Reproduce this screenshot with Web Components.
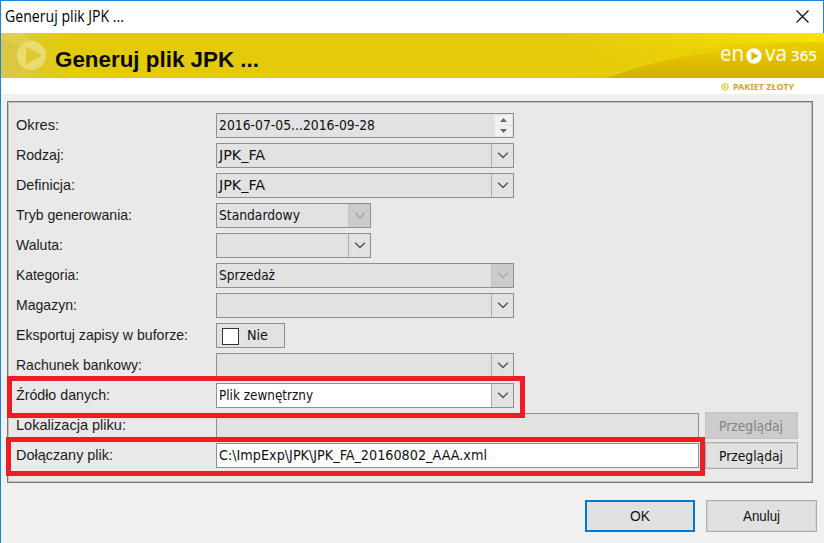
<!DOCTYPE html>
<html lang="pl">
<head>
<meta charset="utf-8">
<title>Generuj plik JPK ...</title>
<style>
  html, body {
    margin: 0;
    height: 100%;
    overflow: hidden;
  }
</style>
</head>
<body>
<jpk-window></jpk-window>

<script>
// one line of text, condensed or widened to the given width
class FitText extends HTMLElement {
  static get style() {
    return /*css*/`
      :host {
        display: block;
        white-space: nowrap;
        flex: none;
      }
      span {
        display: inline-block;
        transform-origin: 0 50%;
      }
    `
  }
  constructor() {
    super();
    this.attachShadow({ mode: 'open' })
    this.shadowRoot.innerHTML = /*html*/`<style>${FitText.style}</style><span><slot></slot></span>`
  }
  connectedCallback() {
    const width = Number(this.getAttribute('width'))
    const span = this.shadowRoot.querySelector('span')
    const natural = span.getBoundingClientRect().width
    if (!width || !natural) return
    span.style.transform = `scaleX(${width / natural})`
    this.style.width = width + 'px'
  }
}


class TitleBar extends HTMLElement {
  static get style() {
    return /*css*/`
      :host {
        display: flex;
        justify-content: space-between;
        align-items: center;
        box-sizing: border-box;
        height: 33px;
        padding: 0 14px 2px 4px;
        background: #fff;
        border-top: 1px solid #1883d7;
        border-right: 1px solid #1883d7;
        font: 15.5px/20px "Open Sans", "Noto Sans", sans-serif;
        color: #000;
      }
      svg { display: block; }
    `
  }
  constructor() {
    super();
    this.attachShadow({ mode: 'open' })
    this.shadowRoot.innerHTML = /*html*/`
      <style>${TitleBar.style}</style>
      <fit-text width="119">Generuj plik JPK ...</fit-text>
      <svg width="13" height="13" viewBox="0 0 13 13"><path d="M.5.500l12 12M12.500.500l-12 12" stroke="#000" stroke-width="1.1" fill="none"/></svg>
    `
  }
}


class BannerBar extends HTMLElement {
  static get style() {
    return /*css*/`
      :host {
        display: block;
        height: 61px;
        background: #fff;
      }
      .bar {
        display: grid;
        grid-template: 45px / 1fr;
        height: 45px;
      }
      .bar > * { grid-area: 1 / 1; }
      .art { display: block; }
      .content {
        display: flex;
        justify-content: space-between;
        padding: 0 7px 0 54px;
      }
      h1 {
        margin: 15px 0 0;
        font: bold 22px/24px "Liberation Sans", Arial, sans-serif;
        color: #0c0a00;
      }
      .logo {
        display: flex;
        align-items: baseline;
        height: 24px;
        margin-top: 8px;
        color: #fffbe6;
        font: 21px/24px "Noto Sans", sans-serif;
      }
      .logo svg { margin: 0 3px 0 2px; transform: translateY(3px); }
      .logo .num {
        margin-left: 4px;
        font: 600 14px/24px "Open Sans", sans-serif;
      }
      .package {
        display: flex;
        align-items: center;
        gap: 4px;
        height: 16px;
        padding: 2px 0 0 720px;
        box-sizing: border-box;
        font: bold 9px/12px "Noto Sans", sans-serif;
        color: #cda62c;
      }
    `
  }
  constructor() {
    super();
    this.attachShadow({ mode: 'open' })
    this.shadowRoot.innerHTML = /*html*/`
      <style>${BannerBar.style}</style>
      <div class="bar">
        <svg class="art" width="823" height="45" viewBox="0 0 823 45">
          <defs>
            <linearGradient id="shine" x1="0" y1="0" x2="0" y2="1">
              <stop offset="0" stop-color="#fce400"/>
              <stop offset="1" stop-color="#e6c800"/>
            </linearGradient>
            <linearGradient id="hill" x1="0" y1="0" x2="0" y2="1">
              <stop offset="0" stop-color="#ecd000"/>
              <stop offset="1" stop-color="#d2ae00"/>
            </linearGradient>
            <linearGradient id="fade" x1="0" y1="0" x2="1" y2="0">
              <stop offset="0" stop-color="#e3cb0c"/>
              <stop offset=".2" stop-color="#e3cb0c" stop-opacity=".8"/>
              <stop offset="1" stop-color="#e3cb0c" stop-opacity="0"/>
            </linearGradient>
            <linearGradient id="left" x1="0" y1="0" x2="1" y2="0">
              <stop offset="0" stop-color="#d9c64c"/>
              <stop offset="1" stop-color="#e3cb0c"/>
            </linearGradient>
          </defs>
          <rect width="823" height="45" fill="#e3cb0c"/>
          <rect width="65" height="45" fill="url(#left)"/>
          <path d="M0 0H22Q34 12 50 20L30 17Q10 10 0 6Z" fill="#e8da72" opacity=".35"/>
          <rect x="570" width="253" height="45" fill="url(#shine)"/>
          <rect x="570" width="253" height="45" fill="url(#fade)"/>
          <path d="M606 45C650 22 720 9 823 9V45Z" fill="url(#hill)"/>
          <path d="M606 45C640 22 710 8 823 9C730 14 660 24 606 45Z" fill="#e9cf06"/>
          <circle cx="30.500" cy="22.500" r="14.500" fill="#eadb70"/>
          <path d="M25.500 14.500V31L40 22.500Z" fill="#dfc936" stroke="#dfc936" stroke-linejoin="round"/>
        </svg>
        <div class="content">
          <h1><fit-text width="204">Generuj plik JPK ...</fit-text></h1>
          <div class="logo">
            <fit-text width="24">en</fit-text>
            <svg width="16" height="16" viewBox="0 0 16 16"><circle cx="8" cy="8" r="7.700" fill="#fff"/><path d="M5.400 3.800v8.400L12.400 8z" fill="#d8b800"/></svg>
            <fit-text width="22">va</fit-text>
            <fit-text class="num" width="26">365</fit-text>
          </div>
        </div>
      </div>
      <div class="package">
        <svg width="8" height="8" viewBox="0 0 8 8"><circle cx="4" cy="4" r="3" fill="#fffbe0" stroke="#ead65a" stroke-width="1.700"/><path d="M3 2.300v3.400L5.600 4z" fill="#e0c33c"/></svg>
        <fit-text width="61">PAKIET ZŁOTY</fit-text>
      </div>
    `
  }
}


class FieldRow extends HTMLElement {
  static get style() {
    return /*css*/`
      :host {
        display: grid;
        grid-template-columns: 200px 483px auto;
        align-items: center;
        height: 30px;
      }
      .label {
        font: 14.5px/20px "Liberation Sans", Arial, sans-serif;
        color: #1c1c1c;
      }
    `
  }
  constructor() {
    super();
    this.attachShadow({ mode: 'open' })
    this.shadowRoot.innerHTML = /*html*/`
      <style>${FieldRow.style}</style>
      <div class="label"><fit-text width="${this.getAttribute('width')}">${this.getAttribute('label')}</fit-text></div>
      <slot></slot>
      <slot name="action"></slot>
    `
  }
}


// kind: text, spin, combo or check
class FormField extends HTMLElement {
  static get style() {
    return /*css*/`
      :host {
        display: flex;
        box-sizing: border-box;
        width: 298px;
        height: 25px;
        background: #e2e2e2;
        border: 1px solid #8b9099;
        font: 13.5px/23px "DejaVu Sans Condensed", "DejaVu Sans", sans-serif;
        color: #111;
      }
      :host([small]) { width: 155px; }
      :host([wide]) { width: 483px; }
      :host([kind="check"]) { width: 69px; }
      :host([active]) { background: #fff; }
      .value {
        flex: 1;
        padding-left: 2px;
      }
      .arrow {
        display: flex;
        align-items: center;
        justify-content: center;
        width: 21px;
        border-left: 1px solid #a9acb0;
        background: #e2e2e2;
        color: #555;
      }
      :host([disabled]) .arrow {
        background: #cbcbcb;
        border-color: #c4c4c4;
        color: #a9a9a9;
      }
      .spin {
        display: flex;
        flex-direction: column;
        gap: 1px;
        padding: 1px;
        width: 17px;
        background: #e4e4e4;
      }
      .spin div {
        flex: 1;
        display: flex;
        align-items: center;
        justify-content: center;
        background: #f1f1f1;
      }
      .box {
        box-sizing: border-box;
        width: 17px;
        height: 17px;
        margin: 4px 8px 0 5px;
        border: 1px solid #333;
        background: #fff;
      }
      svg { display: block; }
    `
  }
  constructor() {
    super();
    this.attachShadow({ mode: 'open' })
    this.kind = this.getAttribute('kind') || 'text'
    this.value = this.getAttribute('value') || ''
    this.width = this.getAttribute('width') || ''

    const parts = {
      text: '',
      combo: /*html*/`
        <div class="arrow">
          <svg width="12" height="8" viewBox="0 0 12 8"><path d="M1.200 1.800L6 6.500L10.800 1.800" fill="none" stroke="currentColor" stroke-width="1.500"/></svg>
        </div>`,
      spin: /*html*/`
        <div class="spin">
          <div><svg width="7" height="4" viewBox="0 0 7 4"><path d="M0 4L3.500 0L7 4Z" fill="#666"/></svg></div>
          <div><svg width="7" height="4" viewBox="0 0 7 4"><path d="M0 0L3.500 4L7 0Z" fill="#666"/></svg></div>
        </div>`
    }
    const text = this.value ? `<fit-text width="${this.width}">${this.value}</fit-text>` : ''

    this.shadowRoot.innerHTML = /*html*/`
      <style>${FormField.style}</style>
      ${this.kind === 'check'
        ? `<div class="box"></div>${text}`
        : `<div class="value">${text}</div>${parts[this.kind]}`}
    `
  }
}


class PushButton extends HTMLElement {
  static get style() {
    return /*css*/`
      :host {
        display: flex;
        align-items: center;
        justify-content: center;
        box-sizing: border-box;
        width: 111px;
        height: 32px;
        padding-right: 1px;
        background: #e1e1e1;
        border: 1px solid #adadad;
        outline: 1px solid #d4d4d4;
        outline-offset: -2px;
        font: 14.5px/20px "Liberation Sans", Arial, sans-serif;
        color: #111;
      }
      :host([primary]) {
        width: 110px;
        border: 2px solid #0078d7;
        outline: none;
      }
      :host([browse]) {
        width: 93px;
        height: 27px;
        margin-left: 6px;
        padding: 1px 2px 0 0;
        font: 13.5px/20px "DejaVu Sans Condensed", "DejaVu Sans", sans-serif;
      }
      :host([disabled]) {
        background: #cccccc;
        border-color: #c3c3c3;
        outline: none;
        color: #838383;
      }
    `
  }
  constructor() {
    super();
    this.attachShadow({ mode: 'open' })
    this.shadowRoot.innerHTML = /*html*/`
      <style>${PushButton.style}</style>
      <fit-text width="${this.getAttribute('width')}">${this.getAttribute('label')}</fit-text>
    `
  }
}


class JpkWindow extends HTMLElement {
  static get style() {
    return /*css*/`
      :host {
        display: flex;
        flex-direction: column;
        position: relative;
        box-sizing: border-box;
        width: 824px;
        height: 543px;
        background: #f0f0f0;
        border-left: 1px solid #1883d7;
      }
      .panel {
        box-sizing: border-box;
        height: 382px;
        margin: 7px 11px 0 6px;
        padding: 8px 0 0 8px;
        background: #e9e9e9;
        border: 1px solid #777;
        outline: 1px solid #c0c0c0;
        outline-offset: -2px;
      }
      .buttons {
        display: flex;
        justify-content: flex-end;
        gap: 11px;
        padding: 17px 7px 0 0;
      }
      /* red frames laid over the rows they point at */
      .mark {
        position: absolute;
        box-sizing: border-box;
        border: 5px solid #ee1c24;
      }
      .source { left: 6px; top: 376px; width: 518px; height: 42px; }
      .file { left: 5px; top: 437px; width: 699px; height: 39px; }
    `
  }
  constructor() {
    super();
    this.attachShadow({ mode: 'open' })
    this.shadowRoot.innerHTML = /*html*/`
      <style>${JpkWindow.style}</style>
      <title-bar></title-bar>
      <banner-bar></banner-bar>
      <div class="panel">
        <field-row label="Okres:" width="43"><form-field kind="spin" value="2016-07-05...2016-09-28" width="156"></form-field></field-row>
        <field-row label="Rodzaj:" width="48"><form-field kind="combo" value="JPK_FA" width="46"></form-field></field-row>
        <field-row label="Definicja:" width="59"><form-field kind="combo" value="JPK_FA" width="46"></form-field></field-row>
        <field-row label="Tryb generowania:" width="116"><form-field kind="combo" small disabled value="Standardowy" width="81"></form-field></field-row>
        <field-row label="Waluta:" width="47"><form-field kind="combo" small></form-field></field-row>
        <field-row label="Kategoria:" width="63"><form-field kind="combo" disabled value="Sprzedaż" width="56"></form-field></field-row>
        <field-row label="Magazyn:" width="61"><form-field kind="combo"></form-field></field-row>
        <field-row label="Eksportuj zapisy w buforze:" width="172"><form-field kind="check" value="Nie" width="21"></form-field></field-row>
        <field-row label="Rachunek bankowy:" width="126"><form-field kind="combo"></form-field></field-row>
        <field-row label="Źródło danych:" width="94"><form-field kind="combo" active value="Plik zewnętrzny" width="94"></form-field></field-row>
        <field-row label="Lokalizacja pliku:" width="110">
          <form-field wide></form-field>
          <push-button slot="action" browse disabled label="Przeglądaj" width="64"></push-button>
        </field-row>
        <field-row label="Dołączany plik:" width="97">
          <form-field wide active value="C:\\ImpExp\\JPK\\JPK_FA_20160802_AAA.xml" width="268"></form-field>
          <push-button slot="action" browse label="Przeglądaj" width="64"></push-button>
        </field-row>
      </div>
      <div class="buttons">
        <push-button primary label="OK" width="20"></push-button>
        <push-button label="Anuluj" width="37"></push-button>
      </div>
      <div class="mark source"></div>
      <div class="mark file"></div>
    `
  }
}

customElements.define('fit-text', FitText)
customElements.define('title-bar', TitleBar)
customElements.define('banner-bar', BannerBar)
customElements.define('field-row', FieldRow)
customElements.define('form-field', FormField)
customElements.define('push-button', PushButton)
customElements.define('jpk-window', JpkWindow)
</script>
</body>
</html>
